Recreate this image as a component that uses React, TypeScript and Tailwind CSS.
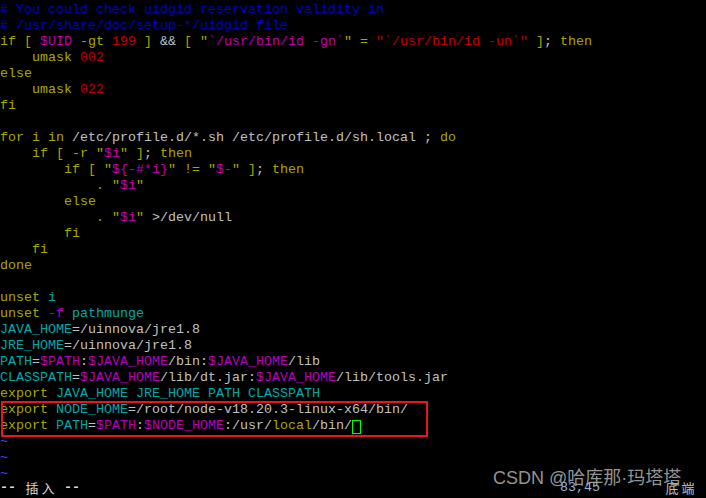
const tone: Record<string, string> = {
  c: "text-[#0000c8]",
  k: "text-[#a8a800]",
  n: "text-[#c00000]",
  v: "text-[#b800b8]",
  i: "text-[#00a8a8]",
  t: "text-[#c0c0c0]",
  o: "text-[#b8c4d4]",
  e: "text-[#4848f0]",
};

type Seg = [string, keyof typeof tone];

const lines: Seg[][] = [
  [["# You could check uidgid reservation validity in", "c"]],
  [["# /usr/share/doc/setup-*/uidgid file", "c"]],
  [
    ["if [ ", "k"], ["$UID", "v"], [" -gt ", "k"], ["199", "n"], [" ] ", "k"],
    ["&&", "o"], [" [ \"", "k"], ["`/usr/bin/id -gn`", "v"], ["\" = ", "k"],
    ["\"`/usr/bin/id -un`\"", "n"], [" ]", "k"], [";", "o"], [" then", "k"],
  ],
  [["    umask ", "k"], ["002", "n"]],
  [["else", "k"]],
  [["    umask ", "k"], ["022", "n"]],
  [["fi", "k"]],
  [],
  [["for i in ", "k"], ["/etc/profile.d/*.sh /etc/profile.d/sh.local ; ", "t"], ["do", "k"]],
  [["    if [ -r \"", "k"], ["$i", "v"], ["\" ]", "k"], [";", "o"], [" then", "k"]],
  [
    ["        if [ \"", "k"], ["${-#*i}", "v"], ["\" != \"", "k"], ["$-", "v"],
    ["\" ]", "k"], [";", "o"], [" then", "k"],
  ],
  [["            . \"", "k"], ["$i", "v"], ["\"", "k"]],
  [["        else", "k"]],
  [["            . \"", "k"], ["$i", "v"], ["\"", "k"], [" >/dev/null", "t"]],
  [["        fi", "k"]],
  [["    fi", "k"]],
  [["done", "k"]],
  [],
  [["unset ", "k"], ["i", "i"]],
  [["unset ", "k"], ["-f", "v"], [" pathmunge", "i"]],
  [["JAVA_HOME", "i"], ["=/uinnova/jre1.8", "t"]],
  [["JRE_HOME", "i"], ["=/uinnova/jre1.8", "t"]],
  [
    ["PATH", "i"], ["=", "t"], ["$PATH", "v"], [":", "t"], ["$JAVA_HOME", "v"],
    ["/bin:", "t"], ["$JAVA_HOME", "v"], ["/lib", "t"],
  ],
  [
    ["CLASSPATH", "i"], ["=", "t"], ["$JAVA_HOME", "v"], ["/lib/dt.jar:", "t"],
    ["$JAVA_HOME", "v"], ["/lib/tools.jar", "t"],
  ],
  [["export ", "k"], ["JAVA_HOME JRE_HOME PATH CLASSPATH", "i"]],
  [["export ", "k"], ["NODE_HOME", "i"], ["=/root/node-v18.20.3-linux-x64/bin/", "t"]],
  [
    ["export ", "k"], ["PATH", "i"], ["=", "t"], ["$PATH", "v"], [":", "t"],
    ["$NODE_HOME", "v"], [":/usr/", "t"], ["local", "k"], ["/bin/", "t"],
  ],
  [["~", "e"]],
  [["~", "e"]],
  [["~", "e"]],
];

function Wide({ ch }: { ch: string }) {
  return (
    <span className="inline-block h-[16px] w-[16px] text-center align-top font-['Noto_Sans_CJK_SC',sans-serif] text-[13px] font-normal leading-[16px]">
      {ch}
    </span>
  );
}

export default function App() {
  return (
    <div className="relative h-[498px] w-[706px] overflow-hidden bg-black pt-[2px] font-['Liberation_Mono','Courier_New',monospace] text-[13.333px] leading-[16px]">
      {lines.map((line, i) => (
        <div key={i} className="h-[16px] whitespace-pre">
          {line.map(([text, kind], j) => (
            <span key={j} className={tone[kind]}>
              {text}
            </span>
          ))}
          {i === 26 && (
            <span className="inline-block h-[14px] w-[9px] translate-y-[2px] border border-[#00ff00] align-top" />
          )}
        </div>
      ))}

      {/* status line */}
      <div className="-mt-[2px] flex h-[16px] items-start whitespace-pre">
        <span className="h-[16px] font-bold text-[#dcdcdc]">
          {"-- "}
          <Wide ch="插" />
          <Wide ch="入" />
          {" --"}
        </span>
        <span className="ml-[480px] h-[16px] text-[#9fb2d0]">83,45</span>
        <span className="ml-[64px] h-[16px] text-[#c0c0c0]">
          <Wide ch="底" />
          <Wide ch="端" />
        </span>
      </div>

      {/* highlight box */}
      <div className="pointer-events-none absolute left-[1px] top-[401px] h-[36px] w-[427px] border-2 border-[#e8141e]" />

      {/* watermark */}
      <div className="pointer-events-none absolute left-[493px] top-[465px] font-['Liberation_Sans','Noto_Sans_CJK_SC',sans-serif] text-[18px] leading-[26px] text-[#a8a8a8]/90">
        CSDN @哈库那·玛塔塔
      </div>
    </div>
  );
}
